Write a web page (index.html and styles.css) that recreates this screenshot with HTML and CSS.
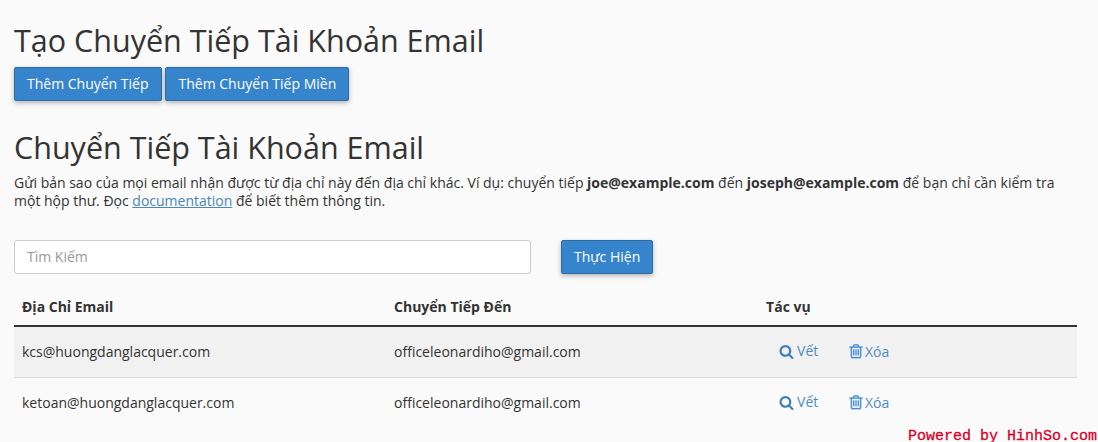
FILE: index.html
```html
<!DOCTYPE html>
<html lang="vi">
<head>
	<meta charset="UTF-8">
	<meta name="viewport" content="width=device-width, initial-scale=1.0">
	<title>Chuyển Tiếp Email</title>
	<link rel="stylesheet" href="styles.css">
</head>
<body>
	<svg class="icon-defs" width="0" height="0">
		<symbol id="icon-search" viewBox="0 0 1792 1792"><path d="M1216 832q0-185-131.500-316.500t-316.500-131.500-316.500 131.500-131.500 316.500 131.500 316.500 316.500 131.500 316.500-131.500 131.500-316.500zm512 832q0 52-38 90t-90 38q-54 0-90-38l-343-342q-179 124-399 124-143 0-273.500-55.500t-225-150-150-225-55.500-273.500 55.500-273.500 150-225 225-150 273.500-55.500 273.500 55.500 225 150 150 225 55.500 273.500q0 220-124 399l343 343q37 37 37 90z"/></symbol>
		<symbol id="icon-trash" viewBox="128 192 1536 1472"><path d="M704 736v576q0 14-9 23t-23 9h-64q-14 0-23-9t-9-23v-576q0-14 9-23t23-9h64q14 0 23 9t9 23zm256 0v576q0 14-9 23t-23 9h-64q-14 0-23-9t-9-23v-576q0-14 9-23t23-9h64q14 0 23 9t9 23zm256 0v576q0 14-9 23t-23 9h-64q-14 0-23-9t-9-23v-576q0-14 9-23t23-9h64q14 0 23 9t9 23zm128 724v-948h-896v948q0 22 7 40.500t14.500 27 10.500 8.500h832q3 0 10.500-8.500t14.500-27 7-40.500zm-672-1076h448l-48-117q-7-9-17-11h-317q-10 2-17 11zm928 32v64q0 14-9 23t-23 9h-96v948q0 83-47 143.500t-113 60.500h-832q-66 0-113-58.500t-47-141.500v-952h-96q-14 0-23-9t-9-23v-64q0-14 9-23t23-9h309l70-167q15-37 54-63t79-26h320q40 0 79 26t54 63l70 167h309q14 0 23 9t9 23z"/></symbol>
	</svg>

	<main class="container">
		<h1>Tạo Chuyển Tiếp Tài Khoản Email</h1>
		<div class="actions">
			<button class="btn">Thêm Chuyển Tiếp</button>
			<button class="btn btn-wide">Thêm Chuyển Tiếp Miền</button>
		</div>

		<h2>Chuyển Tiếp Tài Khoản Email</h2>
		<p class="description">Gửi bản sao của mọi email nhận được từ địa chỉ này đến địa chỉ khác. Ví dụ: chuyển tiếp <b>joe@example.com</b> đến <b>joseph@example.com</b> để bạn chỉ cần kiểm tra một hộp thư. Đọc <a href="#">documentation</a> để biết thêm thông tin.</p>

		<form class="search">
			<input class="search-input" type="text" placeholder="Tìm Kiếm">
			<button class="btn" type="button">Thực Hiện</button>
		</form>

		<table class="forwarders">
			<thead>
				<tr>
					<th>Địa Chỉ Email</th>
					<th>Chuyển Tiếp Đến</th>
					<th>Tác vụ</th>
				</tr>
			</thead>
			<tbody>
				<tr>
					<td>kcs@huongdanglacquer.com</td>
					<td>officeleonardiho@gmail.com</td>
					<td class="row-actions">
						<a href="#" class="trace"><svg class="icon"><use href="#icon-search"/></svg>Vết</a>
						<a href="#" class="delete"><svg class="icon icon-trash"><use href="#icon-trash"/></svg>Xóa</a>
					</td>
				</tr>
				<tr>
					<td>ketoan@huongdanglacquer.com</td>
					<td>officeleonardiho@gmail.com</td>
					<td class="row-actions">
						<a href="#" class="trace"><svg class="icon"><use href="#icon-search"/></svg>Vết</a>
						<a href="#" class="delete"><svg class="icon icon-trash"><use href="#icon-trash"/></svg>Xóa</a>
					</td>
				</tr>
			</tbody>
		</table>
	</main>

	<div class="watermark">Powered by HinhSo.com</div>
</body>
</html>
```

FILE: styles.css
```css
* {
	box-sizing: border-box;
}

html, body {
	height: 442px;
	overflow: hidden;
}

body {
	position: relative;
	margin: 0;
	font-family: "Open Sans", sans-serif;
	font-size: 14px;
	line-height: 1.3;
	color: #333;
	background-color: #fafafa;
}

.icon-defs {
	display: block;
	height: 0;
}

.container {
	width: 1077px;
	padding: 20px 0 0 14px;
}

h1, h2 {
	margin: 0;
	font-size: 30.5px;
	font-weight: 400;
	line-height: 41px;
}

.actions {
	display: flex;
	gap: 3px;
	margin-top: 6px;
}

.btn {
	height: 34px;
	padding: 0 12px 2px;
	border: 1px solid #2e6da4;
	border-radius: 2px;
	background-color: #3584cc;
	color: #fff;
	font-family: inherit;
	font-size: 14px;
	box-shadow: 0 2px 5px rgba(0, 0, 0, .28);
}

.btn-wide {
	padding-left: 13px;
}

h2 {
	margin-top: 26px;
}

.description {
	margin: 6px 0 0;
	line-height: 18px;
}

.description a {
	color: #4a86b8;
}

.search {
	display: flex;
	gap: 30px;
	margin-top: 30px;
}

.search-input {
	width: 517px;
	height: 34px;
	padding: 0 12px 2px;
	border: 1px solid #ccc;
	border-radius: 3px;
	background-color: #fff;
	font-family: inherit;
	font-size: 14px;
}

.search-input::placeholder {
	color: #999;
}

.forwarders {
	width: 1063px;
	margin-top: 15px;
	border-collapse: collapse;
	table-layout: fixed;
}

.forwarders th {
	width: 35%;
	height: 37px;
	padding: 0 8px;
	border-bottom: 2px solid #333;
	text-align: left;
	font-weight: 700;
}

.forwarders th:last-child,
.forwarders td:last-child {
	width: 30%;
}

.forwarders td {
	height: 51px;
	padding: 0 8px;
	border-bottom: 1px solid #ddd;
}

.forwarders tbody tr:nth-child(odd) {
	background-color: #f1f1f1;
}

.forwarders tbody tr:last-child td {
	border-bottom: none;
}

.row-actions a {
	display: inline-flex;
	align-items: center;
	gap: 3px;
	color: #4f8dc0;
	text-decoration: none;
	transform: translateY(1px);
}

.row-actions .trace {
	margin-left: 13px;
}

.row-actions .delete {
	margin-left: 27px;
	gap: 2px;
}

.icon {
	width: 15px;
	height: 15px;
	fill: #3f7fb8;
}

.icon-trash {
	width: 14px;
	height: 15px;
	margin-top: -2px;
	fill: #4a8fd2;
	stroke: #4a8fd2;
	stroke-width: 30;
}

.watermark {
	position: absolute;
	right: 0;
	bottom: 0;
	padding-right: 1px;
	font-family: "Liberation Mono", monospace;
	font-size: 15px;
	line-height: 11px;
	color: #d6002a;
	-webkit-text-stroke: .3px #d6002a;
}
```
